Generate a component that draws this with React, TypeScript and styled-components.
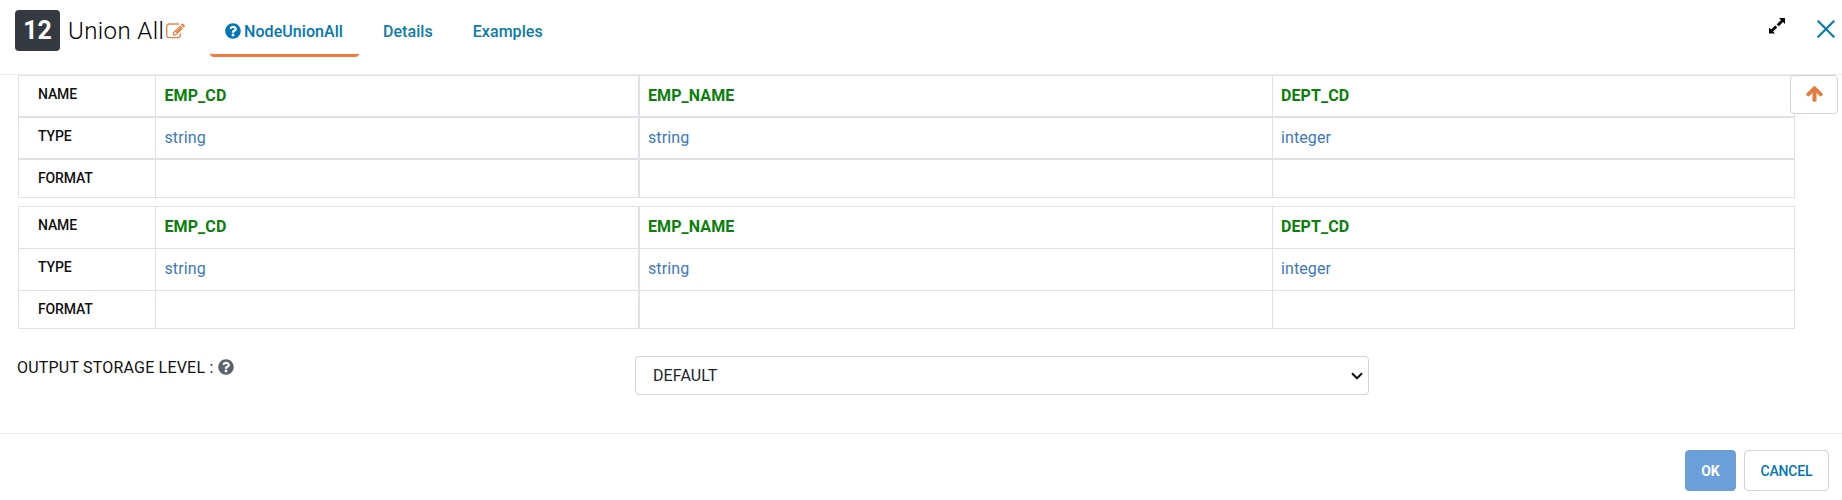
import React from 'react';
import styled, { createGlobalStyle } from 'styled-components';
import { FaQuestionCircle } from 'react-icons/fa';

const GlobalStyle = createGlobalStyle`
  * { box-sizing: border-box; }
  body {
    margin: 0;
    background: #fff;
    color: #212529;
    font-family: Roboto, sans-serif;
    font-size: 16px;
  }
`;

const Dialog = styled.div`
  display: flex;
  flex-direction: column;
  height: 500px;
  background: #fff;
`;

const Header = styled.header`
  display: flex;
  align-items: flex-start;
  height: 75px;
  padding: 10px 7px 0 15px;
  border-bottom: 1px solid #e9ecef;
`;

const Badge = styled.span`
  width: 45px;
  height: 41px;
  border-radius: 4px;
  background: #343a40;
  color: #fff;
  font-size: 25px;
  font-weight: 700;
  line-height: 41px;
  text-align: center;
`;

const Title = styled.h1`
  width: 98px;
  margin: 0 0 0 8px;
  font-size: 24px;
  font-weight: 300;
  letter-spacing: 0.4px;
  line-height: 43px;
  white-space: nowrap;
  color: #000;
`;

const EditIcon = styled.svg`
  width: 19px;
  height: 19px;
  margin-top: 12px;
  fill: #e8824a;
`;

const Tabs = styled.nav`
  display: flex;
  gap: 8px;
  margin-left: 25px;
`;

const Tab = styled.a<{ $active?: boolean }>`
  display: flex;
  align-items: center;
  gap: 3px;
  height: 47px;
  padding: 0 16px ${p => (p.$active ? 2 : 5)}px;
  padding-left: ${p => (p.$active ? 15 : 16)}px;
  border-bottom: ${p => (p.$active ? '3px solid #f47b3c' : '0')};
  border-radius: 4px;
  color: ${p => (p.$active ? '#0277b5' : '#0b7cab')};
  font-weight: 500;
  letter-spacing: 0.06px;
  white-space: nowrap;

  svg {
    margin-bottom: 1px;
  }
`;

const WindowActions = styled.div`
  display: flex;
  align-items: flex-start;
  gap: 32px;
  margin-left: auto;
`;

const ExpandIcon = styled.svg`
  width: 16px;
  height: 16px;
  margin-top: 8px;
`;

const CloseIcon = styled.svg`
  width: 18px;
  height: 18px;
  margin-top: 10px;
`;

const Body = styled.main`
  position: relative;
  display: flex;
  flex-direction: column;
  height: 358px;
  padding: 0 47px 0 18px;
`;

const ScrollTop = styled.button`
  position: absolute;
  top: 0;
  right: 4px;
  display: flex;
  align-items: center;
  justify-content: center;
  width: 48px;
  height: 39px;
  padding: 0 0 3px;
  border: 1px solid #ced4da;
  border-radius: 4px;
  background: #fff;
`;

const Schema = styled.section<{ $line: number }>`
  display: grid;
  grid-template-columns: 137px 484px 633px 522px;
  grid-template-rows: 42px 42px 38px;
  margin-bottom: 8px;
  border: solid #dee2e6;
  border-width: 1px 0 0 1px;
  --row-line: ${p => p.$line}px;
`;

const Cell = styled.div<{ $last?: boolean; $wide?: boolean }>`
  padding: 9px 8px 0 ${p => (p.$wide ? 8.5 : 8)}px;
  border: solid #dee2e6;
  border-width: 0 ${p => (p.$wide ? 2 : 1)}px ${p => (p.$last ? '1px' : 'var(--row-line)')} 0;
  line-height: 22px;
  letter-spacing: 0.1px;
`;

const LabelCell = styled(Cell)`
  padding: 8px 19px 0;
  color: #111;
  font-size: 14px;
  font-weight: 500;
  line-height: 21px;
  letter-spacing: -0.15px;
`;

const NameCell = styled(Cell)`
  color: #0a800a;
  font-weight: 700;
`;

const TypeCell = styled(Cell)`
  color: #3b78bd;
`;

const StorageRow = styled.div`
  display: flex;
  padding-top: 19px;
`;

const StorageLabel = styled.label`
  display: flex;
  align-items: center;
  gap: 5px;
  width: 618px;
  height: 22px;
  margin-left: -1px;
  color: #111;
  letter-spacing: 0.2px;
`;

const SelectBox = styled.div`
  display: flex;
  align-items: center;
  justify-content: space-between;
  width: 734px;
  height: 39px;
  padding: 0 5px 0 17px;
  border: 1px solid #ced4da;
  border-radius: 4px;
  color: #212529;
  letter-spacing: 0.1px;
`;

const Footer = styled.footer`
  display: flex;
  justify-content: flex-end;
  gap: 8px;
  height: 67px;
  padding: 16px 13px 0 0;
  border-top: 1px solid #e9ecef;
`;

const Button = styled.button<{ $primary?: boolean }>`
  width: ${p => (p.$primary ? 51 : 85)}px;
  height: 41px;
  padding: 0;
  border: 1px solid ${p => (p.$primary ? '#6a9fd9' : '#ced4da')};
  border-radius: 4px;
  background: ${p => (p.$primary ? '#6a9fd9' : '#fff')};
  color: ${p => (p.$primary ? '#fff' : '#0277b5')};
  font: ${p => (p.$primary ? 700 : 500)} 14px Roboto, sans-serif;
  letter-spacing: -0.15px;
`;

const fields = [
  { name: 'EMP_CD', type: 'string' },
  { name: 'EMP_NAME', type: 'string' },
  { name: 'DEPT_CD', type: 'integer' },
];

function SchemaTable({ line }: { line: number }) {
  return (
    <Schema $line={line}>
      <LabelCell>NAME</LabelCell>
      {fields.map((f, i) => <NameCell key={f.name} $wide={i === 0}>{f.name}</NameCell>)}
      <LabelCell>TYPE</LabelCell>
      {fields.map((f, i) => <TypeCell key={f.name} $wide={i === 0}>{f.type}</TypeCell>)}
      <LabelCell $last>FORMAT</LabelCell>
      {fields.map((f, i) => <Cell key={f.name} $last $wide={i === 0} />)}
    </Schema>
  );
}

export default function App() {
  return (
    <Dialog>
      <GlobalStyle />
      <Header>
        <Badge>12</Badge>
        <Title>Union All</Title>
        <EditIcon viewBox="0 0 1792 1792">
          <path d="M888 1184l116-116-152-152-116 116v56h96v96h56zm440-720q-16-16-33 1l-350 350q-17 17-1 33t33-1l350-350q17-17 1-33zm80 594v190q0 119-84.5 203.5t-203.5 84.5h-832q-119 0-203.5-84.5t-84.5-203.5v-832q0-119 84.5-203.5t203.5-84.5h832q63 0 117 25 15 7 18 23 3 17-9 29l-49 49q-14 14-32 8-23-6-45-6h-832q-66 0-113 47t-47 113v832q0 66 47 113t113 47h832q66 0 113-47t47-113v-126q0-13 9-22l64-64q15-15 35-7t20 29zm-96-738l288 288-672 672h-288v-288zm444 132l-92 92-288-288 92-92q28-28 68-28t68 28l152 152q28 28 28 68t-28 68z" />
        </EditIcon>
        <Tabs>
          <Tab $active><FaQuestionCircle size={16} />NodeUnionAll</Tab>
          <Tab>Details</Tab>
          <Tab>Examples</Tab>
        </Tabs>
        <WindowActions>
          <ExpandIcon viewBox="0 0 16 16">
            <path d="M10 0h6v6l-2-2-4.2 4.2-2-2L12 2zM0 9.5l2 2 4.2-4 2 2L4 13.6l2 2H0z" />
          </ExpandIcon>
          <CloseIcon viewBox="0 0 18 18">
            <path d="M1.3 1.3l15.4 15.4M16.7 1.3L1.3 16.7" stroke="#0b7cab" strokeWidth="2.2" strokeLinecap="round" />
          </CloseIcon>
        </WindowActions>
      </Header>
      <Body>
        <SchemaTable line={2} />
        <SchemaTable line={1} />
        <StorageRow>
          <StorageLabel>OUTPUT STORAGE LEVEL : <FaQuestionCircle size={16} color="#5c636a" /></StorageLabel>
          <SelectBox>
            DEFAULT
            <svg width="12" height="8" viewBox="0 0 12 8" fill="none">
              <path d="M1 1.3l5 5 5-5" stroke="#111" strokeWidth="2" />
            </svg>
          </SelectBox>
        </StorageRow>
        <ScrollTop aria-label="Scroll to top">
          <svg width="19" height="19" viewBox="0 0 1792 1792" fill="#e27d42">
            <path d="M1675 971q0 51-37 90l-75 75q-38 38-91 38-54 0-90-38l-294-293v704q0 52-37.5 84.5t-90.5 32.5h-128q-53 0-90.5-32.5t-37.5-84.5v-704l-294 293q-36 38-90 38t-90-38l-75-75q-38-38-38-90 0-53 38-91l651-651q35-37 90-37 54 0 91 37l651 651q37 39 37 91z" />
          </svg>
        </ScrollTop>
      </Body>
      <Footer>
        <Button $primary>OK</Button>
        <Button>CANCEL</Button>
      </Footer>
    </Dialog>
  );
}
